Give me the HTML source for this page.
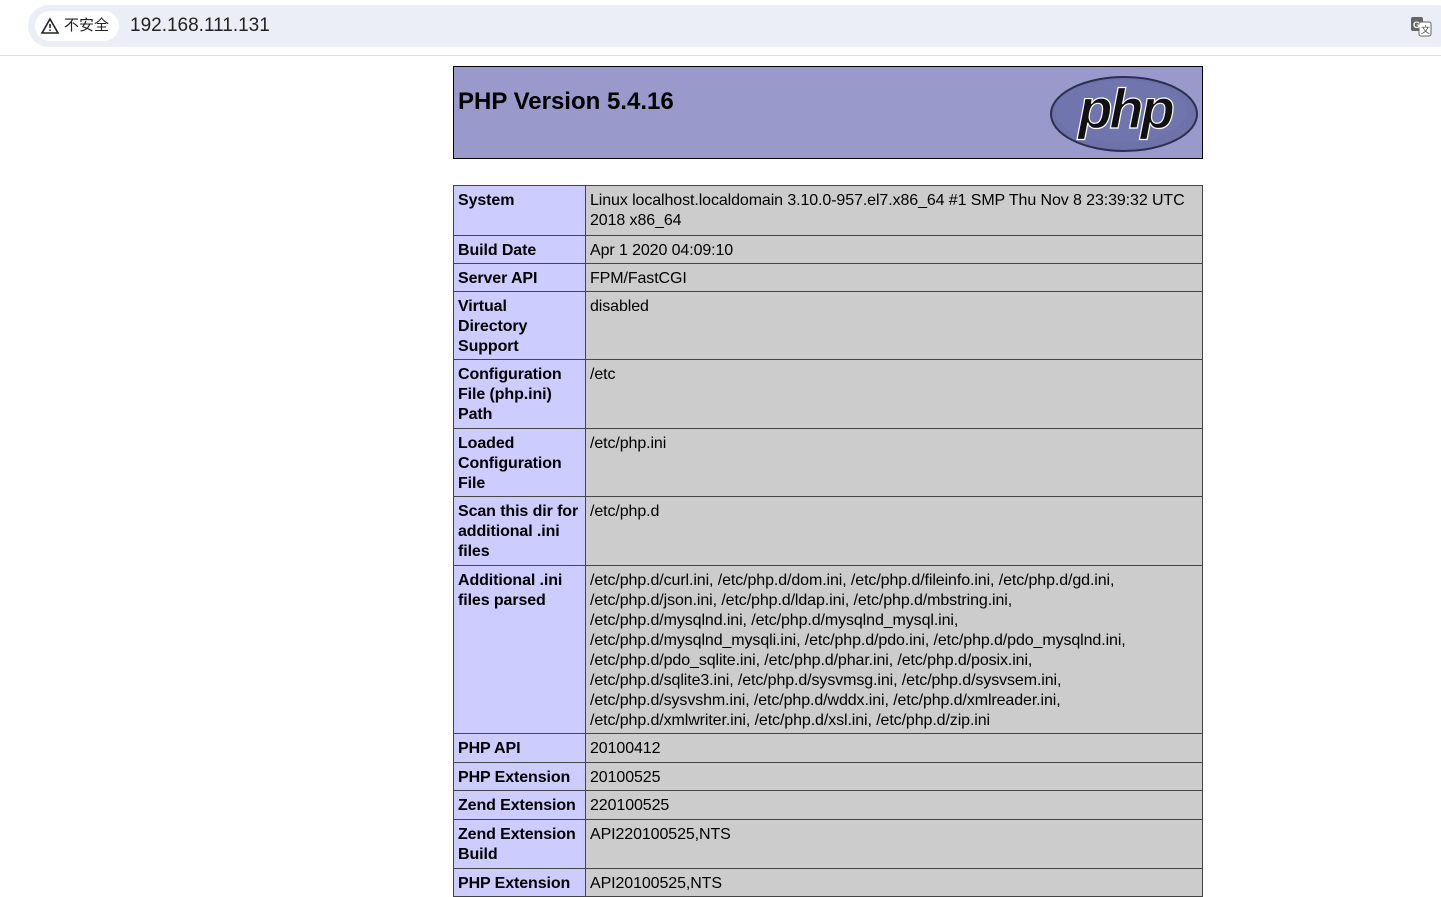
<!DOCTYPE html>
<html><head><meta charset="utf-8"><style>
body{margin:0;width:1441px;height:871px;overflow:hidden;background:#fff;font-family:"Liberation Sans","Noto Sans CJK SC",sans-serif;position:relative}
.bar{position:absolute;left:0;top:0;width:1441px;height:55px;border-bottom:1px solid #dedede;background:#fff}
.omni{position:absolute;left:28px;top:5px;width:1430px;height:42px;border-radius:21px;background:#ebeef7}
.chip{position:absolute;left:35px;top:11px;width:84px;height:30px;border-radius:15px;background:#fff;font-size:15px;color:#222;line-height:30px}
.url{position:absolute;left:130px;top:15px;font-size:19px;color:#222}
.hdr{position:absolute;left:453px;top:66px;width:748px;height:91px;border:1px solid #000;background:#9999cc}
.hdr h1{margin:0;position:absolute;left:4px;top:21px;font-size:24px;font-weight:bold;color:#000}
.r{position:absolute;left:453px;width:750px;font-size:16px;letter-spacing:-0.1px;line-height:20px}
.r div{position:absolute;top:0;bottom:0;border:1px solid #444;box-sizing:border-box;padding:5px 4px 0;white-space:nowrap;overflow:hidden}
.e{left:0;width:133px;background:#ccccff;font-weight:bold}
.v{left:132px;right:0;background:#cccccc}
</style></head><body>
<div class="bar"><div class="omni"></div>
<div class="chip"><svg width="18" height="18" style="position:absolute;left:6px;top:6px" viewBox="0 0 18 18"><path d="M9 2 L17 16 H1 Z" fill="none" stroke="#222" stroke-width="1.6"/><path d="M9 7v4M9 12.5v1.5" stroke="#222" stroke-width="1.6"/></svg><span style="position:absolute;left:29px">不安全</span></div>
<div class="url">192.168.111.131</div>
<svg style="position:absolute;left:1410px;top:16px" width="22" height="22" viewBox="0 0 22 22"><rect x="1" y="1" width="12" height="14" rx="2" fill="#666"/><rect x="9" y="6" width="12" height="14" rx="2" fill="#fff" stroke="#666"/><text x="3" y="12" font-size="9" fill="#fff" font-family="Liberation Sans" font-weight="bold">G</text><text x="11" y="17" font-size="9" fill="#444">文</text></svg>
</div>
<div class="hdr"><h1>PHP Version 5.4.16</h1>
<svg style="position:absolute;left:595px;top:8px" width="150" height="78" viewBox="0 0 150 78"><ellipse cx="75" cy="39" rx="73" ry="37" fill="#6f72a9" stroke="#2d2f4e" stroke-width="2"/><ellipse cx="72" cy="36" rx="66" ry="31" fill="#7478b4" opacity=".5"/><text x="76" y="53" text-anchor="middle" font-family="Liberation Sans" font-style="italic" font-weight="bold" font-size="56" fill="#111" stroke="#fff" stroke-width="1.2" letter-spacing="-3">php</text></svg>
</div>
<div class="r" style="top:185px;height:51px"><div class="e">System</div><div class="v">Linux localhost.localdomain 3.10.0-957.el7.x86_64 #1 SMP Thu Nov 8 23:39:32 UTC<br>2018 x86_64</div></div>
<div class="r" style="top:235px;height:29px"><div class="e">Build Date</div><div class="v">Apr 1 2020 04:09:10</div></div>
<div class="r" style="top:263px;height:29px"><div class="e">Server API</div><div class="v">FPM/FastCGI</div></div>
<div class="r" style="top:291px;height:69px"><div class="e">Virtual<br>Directory<br>Support</div><div class="v">disabled</div></div>
<div class="r" style="top:359px;height:70px"><div class="e">Configuration<br>File (php.ini)<br>Path</div><div class="v">/etc</div></div>
<div class="r" style="top:428px;height:69px"><div class="e">Loaded<br>Configuration<br>File</div><div class="v">/etc/php.ini</div></div>
<div class="r" style="top:496px;height:70px"><div class="e">Scan this dir for<br>additional .ini<br>files</div><div class="v">/etc/php.d</div></div>
<div class="r" style="top:565px;height:169px"><div class="e">Additional .ini<br>files parsed</div><div class="v">/etc/php.d/curl.ini, /etc/php.d/dom.ini, /etc/php.d/fileinfo.ini, /etc/php.d/gd.ini,<br>/etc/php.d/json.ini, /etc/php.d/ldap.ini, /etc/php.d/mbstring.ini,<br>/etc/php.d/mysqlnd.ini, /etc/php.d/mysqlnd_mysql.ini,<br>/etc/php.d/mysqlnd_mysqli.ini, /etc/php.d/pdo.ini, /etc/php.d/pdo_mysqlnd.ini,<br>/etc/php.d/pdo_sqlite.ini, /etc/php.d/phar.ini, /etc/php.d/posix.ini,<br>/etc/php.d/sqlite3.ini, /etc/php.d/sysvmsg.ini, /etc/php.d/sysvsem.ini,<br>/etc/php.d/sysvshm.ini, /etc/php.d/wddx.ini, /etc/php.d/xmlreader.ini,<br>/etc/php.d/xmlwriter.ini, /etc/php.d/xsl.ini, /etc/php.d/zip.ini</div></div>
<div class="r" style="top:733px;height:30px"><div class="e">PHP API</div><div class="v">20100412</div></div>
<div class="r" style="top:762px;height:29px"><div class="e">PHP Extension</div><div class="v">20100525</div></div>
<div class="r" style="top:790px;height:30px"><div class="e">Zend Extension</div><div class="v">220100525</div></div>
<div class="r" style="top:819px;height:50px"><div class="e">Zend Extension<br>Build</div><div class="v">API220100525,NTS</div></div>
<div class="r" style="top:868px;height:29px"><div class="e">PHP Extension</div><div class="v">API20100525,NTS</div></div>
</body></html>
